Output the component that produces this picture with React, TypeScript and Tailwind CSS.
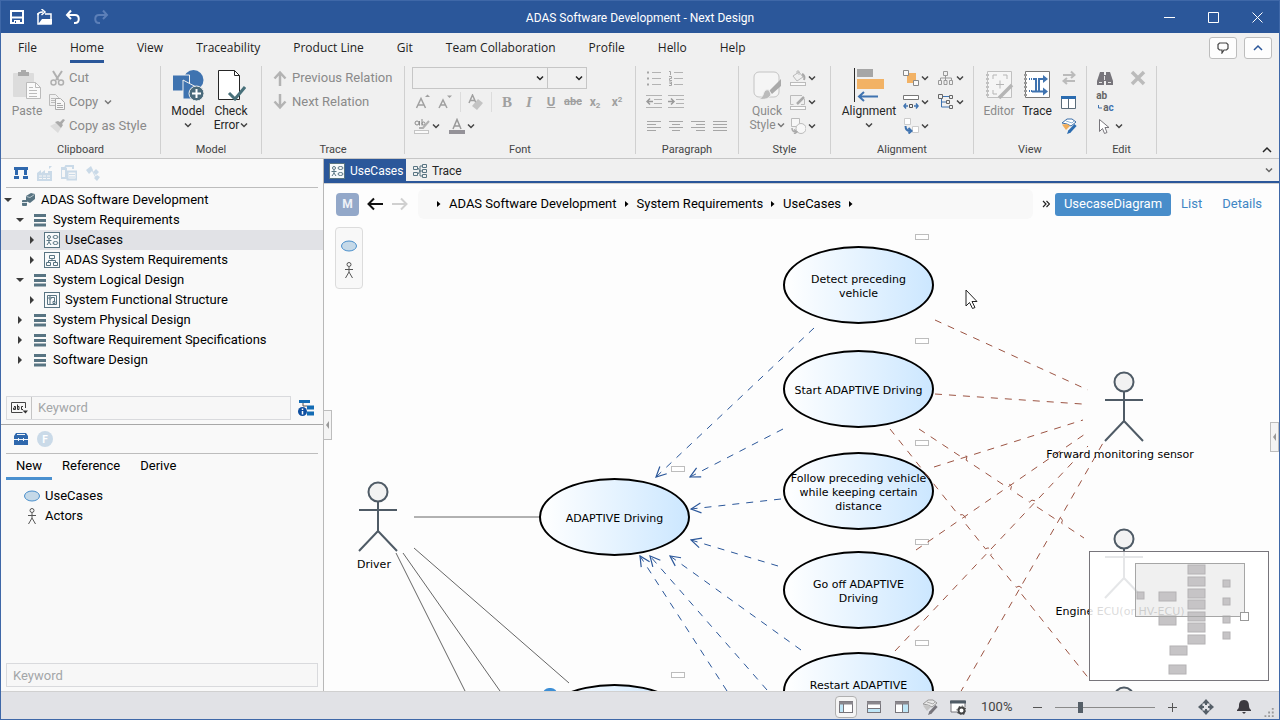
import { ReactNode } from "react";
import { clsx } from "clsx";

type Kind = "project" | "package" | "usecase" | "struct" | "function";

interface TreeItem {
  label: string;
  depth: 0 | 1 | 2;
  kind: Kind;
  open?: boolean;
  selected?: boolean;
}

const TREE: TreeItem[] = [
  { label: "ADAS Software Development", depth: 0, kind: "project", open: true },
  { label: "System Requirements", depth: 1, kind: "package", open: true },
  { label: "UseCases", depth: 2, kind: "usecase", selected: true },
  { label: "ADAS System Requirements", depth: 2, kind: "struct" },
  { label: "System Logical Design", depth: 1, kind: "package", open: true },
  { label: "System Functional Structure", depth: 2, kind: "function" },
  { label: "System Physical Design", depth: 1, kind: "package" },
  { label: "Software Requirement Specifications", depth: 1, kind: "package" },
  { label: "Software Design", depth: 1, kind: "package" },
];

const DEPTH_PADDING = ["pl-px", "pl-[13px]", "pl-[25px]"];

const MENU = ["File", "Home", "View", "Traceability", "Product Line", "Git", "Team Collaboration", "Profile", "Hello", "Help"];

/* ---------- diagram data (canvas coordinates) ---------- */

const USE_CASES = [
  { label: "Detect preceding vehicle", x: 459, y: 22 },
  { label: "Start ADAPTIVE Driving", x: 459, y: 126 },
  { label: "Follow preceding vehicle while keeping certain distance", x: 459, y: 228 },
  { label: "Go off ADAPTIVE Driving", x: 459, y: 327 },
  { label: "Restart ADAPTIVE Driving", x: 459, y: 428 },
  { label: "ADAPTIVE Driving", x: 215, y: 254 },
  { label: "", x: 215, y: 460 },
];

const ACTORS = [
  { label: "Driver", x: 54, y: 268 },
  { label: "Forward monitoring sensor", x: 800, y: 158 },
  { label: "Engine ECU(or HV-ECU)", x: 800, y: 315 },
  { label: "", x: 800, y: 473 },
];

const INCLUDES = [
  [490, 104, 332, 253],
  [459, 205, 366, 253],
  [457, 275, 367, 285],
  [454, 342, 367, 316],
  [477, 426, 346, 332],
  [443, 466, 326, 332],
  [403, 467, 316, 332],
];

const SENSOR_LINKS = [
  [611, 96, 764, 166],
  [611, 170, 758, 180],
  [610, 243, 759, 196],
  [592, 326, 764, 208],
  [571, 427, 764, 222],
  [636, 469, 779, 219],
];

const ECU_LINKS = [
  { line: [595, 205, 760, 314], hops: [0.265, 0.535, 0.69, 0.844] },
  { line: [566, 205, 766, 456], hops: [0.357, 0.49, 0.643] },
];

const DRIVER_LINKS = [
  [72, 329, 141, 467],
  [79, 329, 176, 467],
  [90, 324, 245, 459],
];

const MAP_WIDE = [
  [99, 14], [99, 26], [99, 38], [99, 49], [99, 61], [99, 72], [99, 84],
  [70, 41], [70, 65], [81, 95], [80, 114],
];
const MAP_SMALL = [[48, 41], [134, 29], [134, 47], [134, 65], [134, 81]];

// line with small arcs where it jumps over another link
function hopPath(line: number[], hops: number[]) {
  const [x1, y1, x2, y2] = line;
  const len = Math.hypot(x2 - x1, y2 - y1);
  const dx = ((x2 - x1) / len) * 4;
  const dy = ((y2 - y1) / len) * 4;
  const arcs = hops.map((t) => {
    const x = x1 + (x2 - x1) * t;
    const y = y1 + (y2 - y1) * t;
    return `L${x - dx} ${y - dy}A4 4 0 0 1 ${x + dx} ${y + dy}`;
  });
  return `M${x1} ${y1}${arcs.join("")}L${x2} ${y2}`;
}

/* ---------- icons ---------- */

function Svg({ w = 16, h = 16, className, children }: { w?: number; h?: number; className?: string; children: ReactNode }) {
  return (
    <svg width={w} height={h} viewBox={`0 0 ${w} ${h}`} fill="none" className={clsx("shrink-0", className)} aria-hidden="true">
      {children}
    </svg>
  );
}

function Chevron({ className = "text-[#444]" }: { className?: string }) {
  return (
    <Svg w={8} h={8} className={className}>
      <path d="M1 2.500l3 3 3-3" stroke="currentColor" strokeWidth="1.500" />
    </Svg>
  );
}

function Ellipse() {
  return (
    <Svg>
      <ellipse cx="8" cy="8" rx="7.500" ry="5" fill="#c5d9e8" stroke="#4a8fcb" />
    </Svg>
  );
}

function Person() {
  return (
    <Svg>
      <circle cx="8" cy="2.500" r="2" stroke="#555" />
      <path d="M8 5v5M4 7.500h8M8 10l-3.500 6M8 10l3.500 6" stroke="#555" />
    </Svg>
  );
}

function KindIcon({ kind }: { kind: Kind }) {
  if (kind === "project")
    return (
      <Svg>
        <path d="M6 4l5-3 4 1v5l-5 4-4-2z" fill="#587482" />
        <path d="M6.500 4.500l3.500 1 4.500-3" stroke="#b8c6cd" />
        <rect x="2" y="8" width="5" height="6" rx="1" fill="#587482" />
        <path d="M2 10.500h5" stroke="#dfe6ea" />
      </Svg>
    );
  if (kind === "package")
    return (
      <Svg>
        <path d="M2 3.500h12M2 8.500h12M2 13h12" stroke="#587482" strokeWidth="3" />
      </Svg>
    );
  return (
    <Svg>
      <rect x="0.5" y="0.5" width="15" height="15" fill="#f8fafb" stroke="#587482" />
      {kind === "usecase" && (
        <g stroke="#587482">
          <circle cx="5" cy="5" r="1.500" />
          <path d="M5 7v3M2.500 8.500h5M5 10l-2 3M5 10l2 3" />
          <ellipse cx="11.500" cy="5" rx="2.500" ry="1.500" />
          <ellipse cx="11.500" cy="11" rx="2.500" ry="1.500" />
        </g>
      )}
      {kind === "struct" && (
        <path d="M5.500 3.500h5v3h-5zM2.500 10.500h4v3h-4zM9.500 10.500h4v3h-4zM8 6.500v2M4.500 10V8.500h7V10" stroke="#587482" />
      )}
      {kind === "function" && (
        <path d="M3.500 3.500h9v9h-9zM5 5h2v2H5zM9 9.500h2v2H9zM6 7v5M7 5.500h3.500V9" stroke="#587482" />
      )}
    </Svg>
  );
}

function TraceTabIcon() {
  return (
    <Svg>
      <path d="M1.500 3.500h4v3h-4zM1.500 9.500h4v3h-4zM10.500 1.500h4v3h-4zM10.500 6.500h4v3h-4zM10.500 11.500h4v3h-4zM6 5l2 3M6 11l2-3h2M8 8V3h2M8 8v5h2" stroke="#587482" />
    </Svg>
  );
}

function PanesIcon({ side }: { side: "left" | "bottom" | "right" }) {
  return (
    <Svg>
      <rect x="1.500" y="2.500" width="13" height="11" fill="#fff" stroke="#77757b" />
      {side === "left" && <path d="M2 5h3v8H2z" fill="#bfe6f7" />}
      {side === "bottom" && <path d="M2 9h12v4H2z" fill="#bfe6f7" />}
      {side === "right" && <path d="M8 5h6v8H8z" fill="#bfe6f7" />}
      <path d="M1 4h14" stroke="#8a878d" strokeWidth="3" />
      {side === "left" && <path d="M5.500 5v8" stroke="#77757b" />}
      {side === "right" && <path d="M8.500 5v8" stroke="#77757b" />}
      {side === "bottom" && <path d="M2 9.500h12" stroke="#77757b" />}
    </Svg>
  );
}

function CubePenIcon({ gray = false }: { gray?: boolean }) {
  return (
    <Svg>
      <path d="M1 5l5-4h5l4 3-5 4-4-2z" fill={gray ? "#e8e8e8" : "#fff"} stroke={gray ? "#999" : "#3a6ea8"} />
      <path d="M1 6.500l4 5.500 4-4-3-2z" fill={gray ? "#c4c4c4" : "#f0ad5b"} />
      <path d="M5 3l6 2 2-2" stroke={gray ? "#aaa" : "#8fb4d6"} />
      <path d="M14.500 7L8.500 13.500" stroke={gray ? "#77757b" : "#2b6cb0"} strokeWidth="3" />
      <path d="M7.500 12L6 16l4-1.500z" fill={gray ? "#77757b" : "#2b6cb0"} />
    </Svg>
  );
}

/* ---------- ribbon ---------- */

function Group({ label, className, children }: { label: string; className: string; children: ReactNode }) {
  return (
    <section className={clsx("flex shrink-0", className)} aria-label={label}>
      <div className="flex min-w-0 flex-1 flex-col">
        <div className="flex h-[72px]">{children}</div>
        <div className="mt-1 text-center text-[11px] leading-4 text-[#444]">{label}</div>
      </div>
      <div className="h-[88px] w-px bg-[#d0d0d0]" />
    </section>
  );
}

function BigButton({ icon, lines, arrow, disabled, className }: {
  icon: ReactNode;
  lines: string[];
  arrow?: boolean;
  disabled?: boolean;
  className: string;
}) {
  return (
    <button disabled={disabled} className={clsx("flex flex-col items-center text-xs leading-[14px]", disabled ? "text-[#8a8a8a]" : "text-[#262626]", className)}>
      <span className="flex h-[38px] items-center">{icon}</span>
      <span>{lines[0]}</span>
      <span className="flex h-[14px] items-center gap-px">
        {lines[1]}
        {arrow && <Chevron className={disabled ? "text-[#777]" : "text-[#444]"} />}
      </span>
    </button>
  );
}

function TextButton({ icon, label, arrow }: { icon: ReactNode; label: string; arrow?: boolean }) {
  return (
    <button disabled className="flex h-6 items-center gap-1 whitespace-nowrap text-[13px] text-[#8a8a8a]">
      {icon}
      {label}
      {arrow && <Chevron className="ml-0.5 text-[#777]" />}
    </button>
  );
}

function IconButton({ label, arrow, wide, children }: { label: string; arrow?: boolean; wide?: boolean; children: ReactNode }) {
  return (
    <button aria-label={label} className={clsx("flex h-6 items-center gap-0.5", wide ? "w-[35px]" : arrow ? "w-7" : "w-[22px] justify-center")}>
      {children}
      {arrow && <Chevron />}
    </button>
  );
}

function Ribbon() {
  return (
    <div className="flex h-24 shrink-0 items-start border-b border-[#c6c6c6] bg-[#f0f0f0] pt-[3px]">
      <Group label="Clipboard" className="w-40">
        <BigButton
          className="ml-[9px] w-[34px]"
          disabled
          lines={["Paste"]}
          icon={
            <Svg w={30} h={32}>
              <rect x="1" y="4" width="21" height="24" rx="1" fill="#dcdcdc" />
              <path d="M6 7V3h3V1h5v2h3v4z" fill="#aaa" />
              <path d="M14.500 13.500h9l5 5v11h-14z" fill="#fafafa" stroke="#bbb" />
              <path d="M23.500 13.500v5h5M17 18.500h4M17 21.500h8M17 24.500h8M17 27.500h8" stroke="#bbb" />
            </Svg>
          }
        />
        <div className="ml-[5px] flex flex-col">
          <TextButton label="Cut" icon={
            <Svg>
              <path d="M4 1l5.500 9M13 1L7 10" stroke="#b0b0b0" strokeWidth="2" />
              <circle cx="4.500" cy="12.500" r="2.500" stroke="#b0b0b0" strokeWidth="1.500" />
              <circle cx="12" cy="12.500" r="2.500" stroke="#b0b0b0" strokeWidth="1.500" />
            </Svg>
          } />
          <TextButton label="Copy" arrow icon={
            <Svg>
              <path d="M.5.5h6l3 3v8h-9zM2 4.500h4M2 6.500h5M2 8.500h5" stroke="#bbb" />
              <path d="M6.500 4.500h5l4 4v7h-9z" fill="#f7f7f7" stroke="#aaa" />
              <path d="M8 9.500h4M8 11.500h6M8 13.500h6" stroke="#aaa" />
            </Svg>
          } />
          <TextButton label="Copy as Style" icon={
            <Svg>
              <path d="M1 8l6-3 5 5-3 5z" fill="#dcdcdc" />
              <path d="M6 4l6 6 2-3-1-1 3-4-2-1-3 3-2-1z" fill="#aaa" />
            </Svg>
          } />
        </div>
      </Group>

      <Group label="Model" className="w-[101px]">
        <BigButton
          className="ml-1.5 w-[42px]"
          arrow
          lines={["Model"]}
          icon={
            <Svg w={32} h={32}>
              <circle cx="21.500" cy="11" r="10" fill="#3f73b0" />
              <path d="M.5 6h17v16H.5z" fill="#3f73b0" stroke="#f0f0f0" />
              <path d="M11 11l15 8v11H11z" fill="#3f73b0" stroke="#f0f0f0" />
              <circle cx="24.500" cy="24.500" r="7.500" fill="#4b6b7c" stroke="#f0f0f0" />
              <path d="M24.500 20v9M20 24.500h9" stroke="#fff" strokeWidth="2" />
            </Svg>
          }
        />
        <BigButton
          className="ml-px w-[42px]"
          arrow
          lines={["Check", "Error"]}
          icon={
            <Svg w={30} h={32}>
              <path d="M2.500 1.500h16l5 5v24h-21z" fill="#fff" stroke="#262626" />
              <path d="M18.500 1.500v5h5" stroke="#262626" />
              <path d="M13 24l6 6 10-12" stroke="#48707a" strokeWidth="3" />
            </Svg>
          }
        />
      </Group>

      <Group label="Trace" className="w-[143px]">
        <div className="ml-2.5 flex flex-col">
          <TextButton label="Previous Relation" icon={<Svg><path d="M8 16V3M2.500 8.500L8 2.500l5.500 6" stroke="#b3b3b3" strokeWidth="2.500" /></Svg>} />
          <TextButton label="Next Relation" icon={<Svg><path d="M8 0v13M2.500 7.500l5.500 6 5.500-6" stroke="#b3b3b3" strokeWidth="2.500" /></Svg>} />
        </div>
      </Group>

      <Group label="Font" className="w-[231px]">
        <div className="ml-[7px] flex flex-col">
          <div className="flex h-6 items-center">
            <FontSelect label="Font family" className="w-[136px]" />
            <FontSelect label="Font size" className="-ml-px w-10" />
          </div>
          <div className="flex h-6 items-center text-[#a0a0a0]">
            <IconButton label="Grow font">
              <Svg><path d="M1.500 14L6 4.500 10.500 14M3.500 11h5" stroke="currentColor" strokeWidth="1.500" /><path d="M10 3l2.500-2.500L15 3z" fill="currentColor" /></Svg>
            </IconButton>
            <IconButton label="Shrink font">
              <Svg><path d="M2 14l4-8 4 8M4 11h4.500" stroke="currentColor" strokeWidth="1.500" /><path d="M10 1.500h5L12.500 4z" fill="currentColor" /></Svg>
            </IconButton>
            <div className="ml-1 h-5 w-px bg-[#dcdcdc]" />
            <div className="ml-1">
              <IconButton label="Clear formatting">
                <Svg><path d="M1 9l3.500-8L8 9M2.500 6.500h4" stroke="currentColor" strokeWidth="1.500" /><path d="M10 5l5 4-6 7-5-4z" fill="#c4c4c4" /></Svg>
              </IconButton>
            </div>
            <div className="mx-1 h-5 w-px bg-[#dcdcdc]" />
            <button className="w-[22px] font-['Liberation_Serif',serif] text-[15px] font-bold">B</button>
            <button className="w-[22px] font-['Liberation_Serif',serif] text-[15px] font-bold italic">I</button>
            <button className="w-[22px] text-[13px] font-bold underline">U</button>
            <button className="w-[22px] text-[11px] font-bold line-through">abc</button>
            <button className="w-[22px] text-xs font-bold">x<sub className="text-[8px]">2</sub></button>
            <button className="w-[22px] text-xs font-bold">x<sup className="text-[8px]">2</sup></button>
          </div>
          <div className="flex h-6 items-center gap-[7px] pl-0.5 text-[#8a8a8a]">
            <IconButton label="Highlight" arrow>
              <Svg>
                <circle cx="3" cy="5" r="2" stroke="currentColor" /><path d="M5.500 3v4.500M8 1v6.500" stroke="currentColor" /><circle cx="9.500" cy="5.500" r="1.500" stroke="currentColor" />
                <path d="M15 3l-6 7H5" stroke="#b0b0b0" strokeWidth="2" /><rect x=".5" y="12.500" width="14" height="3" fill="#fafafa" stroke="#c4c4c4" />
              </Svg>
            </IconButton>
            <IconButton label="Font color" arrow>
              <Svg><path d="M4 11L8 1.500 12 11M5.500 8h5" stroke="#999" strokeWidth="1.500" /><path d="M0 12h16v4H0z" fill="#949298" /></Svg>
            </IconButton>
          </div>
        </div>
      </Group>

      <Group label="Paragraph" className="w-[103px]">
        <div className="ml-[7px] flex flex-col text-[#b3b3b3]">
          <div className="flex">
            <IconButton label="Bullets"><Svg><path d="M1 2.500h2M1 8.500h2M1 14.500h2" stroke="#a6a6a6" strokeWidth="2" /><path d="M6 2.500h9M6 8.500h9M6 14.500h9" stroke="currentColor" /></Svg></IconButton>
            <IconButton label="Numbering"><Svg><path d="M1 1.500h1.500V5M1 6.500h2.500v2H1.500V10.500H4M1 12h2.500v3.500H1M1.500 13.500h2" stroke="#a6a6a6" /><path d="M6 2.500h9M6 8.500h9M6 14.500h9" stroke="currentColor" /></Svg></IconButton>
          </div>
          <div className="flex">
            <IconButton label="Decrease indent"><Svg><path d="M0 1.500h16M8 5.500h8M8 9.500h8M0 13.500h16" stroke="currentColor" /><path d="M7 7.500H1M4 4.500l-3 3 3 3" stroke="#999" strokeWidth="1.500" /></Svg></IconButton>
            <IconButton label="Increase indent"><Svg><path d="M0 1.500h16M8 5.500h8M8 9.500h8M0 13.500h16" stroke="currentColor" /><path d="M0 7.500h6M3 4.500l3 3-3 3" stroke="#999" strokeWidth="1.500" /></Svg></IconButton>
          </div>
          <div className="flex text-[#a6a6a6]">
            <IconButton label="Align left"><Svg><path d="M1 3.500h14M1 6.500h9M1 9.500h14M1 12.500h9" stroke="currentColor" /></Svg></IconButton>
            <IconButton label="Align center"><Svg><path d="M1 3.500h14M4 6.500h8M1 9.500h14M4 12.500h8" stroke="currentColor" /></Svg></IconButton>
            <IconButton label="Align right"><Svg><path d="M1 3.500h14M6 6.500h9M1 9.500h14M6 12.500h9" stroke="currentColor" /></Svg></IconButton>
            <IconButton label="Justify"><Svg><path d="M1 3.500h14M1 6.500h14M1 9.500h14M1 12.500h14" stroke="currentColor" /></Svg></IconButton>
          </div>
        </div>
      </Group>

      <Group label="Style" className="w-[92px]">
        <BigButton
          className="ml-2 w-10"
          disabled
          arrow
          lines={["Quick", "Style"]}
          icon={
            <Svg w={30} h={30}>
              <rect x="2" y="2" width="25" height="25" rx="5" fill="#f5f5f5" stroke="#c4c4c4" />
              <path d="M29 9v7l-9 8-3-3z" fill="#aaa" />
              <path d="M17 20c-4-1-5 2-6 5-1 2-2 3-4 4 5 1 11 0 12-5z" fill="#bbb" stroke="#f0f0f0" />
            </Svg>
          }
        />
        <div className="ml-[3px] flex flex-col text-[#bbb]">
          <IconButton label="Fill" wide arrow>
            <Svg><path d="M3 6l6-4 4 5-6 4zM7 4V1h2v4" stroke="currentColor" /><path d="M12 4c2 1 3 3 2 6" stroke="#aaa" strokeWidth="2" /><rect x=".5" y="12.500" width="15" height="3" fill="#fafafa" stroke="currentColor" /></Svg>
          </IconButton>
          <IconButton label="Outline" wide arrow>
            <Svg><path d="M12 1.500H.5v9h3M14.500 5v5.500H11" stroke="currentColor" /><path d="M14 3l-7 7" stroke="#aaa" strokeWidth="2.500" /><rect x=".5" y="12.500" width="15" height="3" fill="#fafafa" stroke="currentColor" /></Svg>
          </IconButton>
          <IconButton label="Change shape" wide arrow>
            <Svg><path d="M1.500.5h8v8h-8z" fill="#f7f7f7" stroke="currentColor" /><circle cx="11" cy="10.500" r="5" fill="#f7f7f7" stroke="currentColor" /><path d="M2 10c0 3 2 4 4 4M4 11.500l3 2.500-3 2" stroke="#aaa" strokeWidth="1.500" /></Svg>
          </IconButton>
        </div>
      </Group>

      <Group label="Alignment" className="w-[143px]">
        <BigButton
          className="ml-[9px] w-[58px]"
          arrow
          lines={["Alignment"]}
          icon={
            <Svg w={32} h={34}>
              <path d="M1.500 0v34" stroke="#262626" />
              <path d="M4 1h16v8H4z" fill="#a6a6a6" />
              <path d="M4 11h27v10H4z" fill="#f2b265" />
              <path d="M25 28.500H6M11 24l-5 4.500 5 4.500" stroke="#3f73b0" strokeWidth="2" />
            </Svg>
          }
        />
        <div className="ml-[5px] flex flex-col">
          <IconButton label="Order" wide arrow>
            <Svg><path d="M4 3h9v10H4z" fill="#f2b265" /><path d="M.5.5h5v5h-5zM10.500 10.500h5v5h-5z" fill="#fafafa" stroke="#888" /></Svg>
          </IconButton>
          <IconButton label="Size" wide arrow>
            <Svg><path d="M.5 1.500h15v4H.5z" fill="#fff" stroke="#777" /><path d="M6.500 10.500h3v3h-3z" stroke="#555" /><path d="M5 12H1M3 9.500L1 12l2 2.500M11 12h4M13 9.500l2 2.500-2 2.500" stroke="#3f73b0" strokeWidth="1.500" /></Svg>
          </IconButton>
          <IconButton label="Rotate" wide arrow>
            <Svg><path d="M1.500.5h6v6h-6zM9.500 8.500h6v6h-6z" fill="#fff" stroke="#ccc" /><path d="M2.500 8c0 4 2 5 5 5M5.500 10l3 3-3 2.500" stroke="#3f73b0" strokeWidth="2" /></Svg>
          </IconButton>
        </div>
        <div className="flex flex-col">
          <IconButton label="Auto layout" wide arrow>
            <Svg><path d="M5.500 1.500h4v4h-4zM.5 10.500h3v4h-3zM6 10.500h3v4H6zM11.500 10.500h3v4h-3zM7.500 6v4M2.500 10V8h11v2" stroke="#999" /></Svg>
          </IconButton>
          <IconButton label="Tree layout" wide arrow>
            <Svg><path d="M.5.500h4v4h-4zM11.500 1.500h3v3h-3zM8.500 6.500h3v3h-3zM11.500 11.500h3v3h-3z" stroke="#666" /><path d="M5 2.500h6M3.500 5v8h8M3 8h5" stroke="#3f73b0" /></Svg>
          </IconButton>
        </div>
      </Group>

      <Group label="View" className="w-[113px]">
        <BigButton
          className="ml-1.5 w-[38px]"
          disabled
          lines={["Editor"]}
          icon={
            <Svg w={30} h={32}>
              <path d="M3.500 2.500h24v26h-24z" fill="#f5f5f5" stroke="#c0c0c0" />
              <path d="M3.500 5v24" stroke="#c0c0c0" strokeWidth="3" strokeDasharray="2 2" />
              <path d="M9 10V6h4M19 6h4v4M9 21v4h4M12 15.500h8M16 11.500v8" stroke="#b5b5b5" />
              <path d="M28 16L15 29" stroke="#b5b5b5" strokeWidth="3.500" />
            </Svg>
          }
        />
        <BigButton
          className="w-[38px]"
          lines={["Trace"]}
          icon={
            <Svg w={28} h={32}>
              <path d="M2.500 2.500h24v26h-24z" fill="#fff" stroke="#777" />
              <path d="M2.500 5v24" stroke="#999" strokeWidth="3" strokeDasharray="2 2" />
              <path d="M6 10h3M6 22h3" stroke="#3f73b0" strokeWidth="2" strokeDasharray="1 1" />
              <path d="M10 10h3v12M9 22.500h8M16 9v14M15 10h6M16 22.500h5" stroke="#3f73b0" strokeWidth="2" />
              <path d="M20 6l5 4-5 4zM20 18.500l5 4-5 4z" fill="#3f73b0" />
            </Svg>
          }
        />
        <div className="ml-0.5 flex flex-col">
          <IconButton label="Swap">
            <Svg><path d="M2 5h11M10 1.500L13.500 5 10 8M14 11H3M6 8l-3.500 3L6 14" stroke="#bbb" strokeWidth="2" /></Svg>
          </IconButton>
          <IconButton label="Split window">
            <Svg><path d="M.5 2.500h14v12H.5zM7.500 4v10" fill="#fff" stroke="#5a6b78" /><path d="M0 3.500h15" stroke="#2b6cb0" strokeWidth="3" /></Svg>
          </IconButton>
          <IconButton label="Paint"><CubePenIcon /></IconButton>
        </div>
      </Group>

      <Group label="Edit" className="w-[70px]">
        <div className="ml-[7px] flex w-[31px] flex-col">
          <IconButton label="Find">
            <Svg><path d="M3 2h4v3h2V2h4l3 9v4H9v-4H7v4H0v-4z" fill="#77757b" /><path d="M2 12.500h3M11 12.500h3M7.500 6v4" stroke="#e4e4e4" /></Svg>
          </IconButton>
          <IconButton label="Replace">
            <span className="flex flex-col text-[10px] font-bold leading-3 text-[#666]">
              <span className="text-left">ab</span>
              <span className="flex items-center pl-0.5">
                <Svg w={5} h={8}><path d="M.5 1v3H4" stroke="#3f73b0" /></Svg>
                a<span className="text-[#3f73b0]">c</span>
              </span>
            </span>
          </IconButton>
          <div className="pl-[3px]">
            <IconButton label="Select" arrow>
              <Svg><path d="M2.500 1.500v12l3-3 2 5 2.500-1-2-5h4z" fill="#fff" stroke="#77757b" /></Svg>
            </IconButton>
          </div>
        </div>
        <div className="ml-0.5">
          <IconButton label="Delete">
            <Svg><path d="M2 2l12 12M14 2L2 14" stroke="#bbb" strokeWidth="3.500" /></Svg>
          </IconButton>
        </div>
      </Group>

      <button aria-label="Collapse ribbon" className="ml-auto mr-[7px] self-end pb-1">
        <Svg w={10} h={8}><path d="M1 6l4-4 4 4" stroke="#262626" strokeWidth="1.500" /></Svg>
      </button>
    </div>
  );
}

function FontSelect({ label, className }: { label: string; className: string }) {
  return (
    <div className={clsx("relative h-[22px]", className)}>
      <select aria-label={label} className="h-full w-full appearance-none border border-[#c6c6c6] bg-[#f0f0f0]" />
      <span className="pointer-events-none absolute inset-y-0 right-1 flex items-center"><Chevron className="text-[#222]" /></span>
    </div>
  );
}

/* ---------- side panels ---------- */

function ModelTree() {
  return (
    <ul className="pt-0.5 text-[13px]">
      {TREE.map((item) => (
        <li key={item.label} className={clsx("flex h-5 items-center", DEPTH_PADDING[item.depth], item.selected && "bg-[#e1e2e6]")}>
          <Svg w={12} h={12}>
            <path d={item.open ? "M2 4h8L6 8z" : "M4 2v8l4-4z"} fill="#3c3c3c" />
          </Svg>
          <span className="ml-1.5 mr-[5px] flex"><KindIcon kind={item.kind} /></span>
          {item.label}
        </li>
      ))}
    </ul>
  );
}

function SidePanel() {
  return (
    <aside className="flex w-[323px] shrink-0 flex-col border-r border-[#b8b8b8] bg-[#f9f9f9]">
      <div className="flex h-[266px] shrink-0 flex-col border-b border-[#a8a8a8]">
        <div className="mx-[5px] flex h-[29px] items-center gap-2 border-b border-[#bdbdbd] pl-[7px]">
          <Svg><path d="M1 3.500h14M3.500 5v5M12.500 5v5M1 12.500h5M10 12.500h5" stroke="#2f68ad" strokeWidth="3" /></Svg>
          <Svg><path d="M0 8l4-3v3l4-3v3h3V6h4v10H0zM12 4V1h3" fill="#cadae8" /><path d="M2 11h11M2 13.500h11" stroke="#f7f7f7" strokeDasharray="3 1" /></Svg>
          <Svg><path d="M0 3h4l1-2h7v3M0 4h5v9H0zM6.500 6.500h9v8h-9z" fill="#f7f7f7" stroke="#cadae8" strokeWidth="2" /><path d="M8 9.500h6M8 12h6" stroke="#cadae8" /></Svg>
          <Svg><path d="M1 5l5-4 2 4-4 4zM11 4l3 3-3 3-3-3zM12 10l3 2-3 4-3-3z" fill="#cadae8" /><path d="M7 5l4 8" stroke="#cadae8" /></Svg>
        </div>
        <ModelTree />
        <div className="mb-1 mt-auto flex items-center pl-[5px] pr-[9px]">
          <div className="flex h-6 flex-1 border border-[#d9dadd] bg-[#f7f7f7]">
            <button aria-label="Match mode" className="flex w-[25px] items-center justify-center border-r border-[#c4c4c4]">
              <Svg w={18} h={12}>
                <path d="M15.500 6V.5H1.500v10h11" stroke="#444" />
                <path d="M12.500 8.500H18l-2.500 3z" fill="#333" />
                <path d="M4 4.500h1.500v3H3.500V6H5M7.500 2.500v5h1.500v-3H8M13 4.500h-1.500v3H13" stroke="#333" />
              </Svg>
            </button>
            <input aria-label="Filter models" placeholder="Keyword" className="min-w-0 flex-1 bg-transparent px-1.5 text-[13px] outline-none placeholder:text-[#a3a6a8]" />
          </div>
          <button aria-label="Model info" className="ml-[7px]">
            <Svg>
              <path d="M1 1.500h11" stroke="#146cb4" strokeWidth="3" />
              <path d="M5 3v3h4M10 8h6M10 14h6" stroke="#555" />
              <path d="M9 7.500h7M9 13.500h7" stroke="#146cb4" strokeWidth="4" />
              <circle cx="4.500" cy="11.500" r="4.500" fill="#0f4fa0" />
              <path d="M4.500 8.500v1.500M4.500 11v3.500" stroke="#fff" strokeWidth="1.500" />
            </Svg>
          </button>
        </div>
      </div>

      <div className="flex min-h-0 flex-1 flex-col px-[5px]">
        <div className="flex h-[29px] shrink-0 items-center gap-2 border-b border-[#bdbdbd] pl-[7px]">
          <Svg><path d="M3 2h10l2 3v9H1V5z" fill="#2f68ad" /><path d="M4 3.500h8M1 8.500h14M5.500 7v3M10.500 7v3" stroke="#f2f6fa" /></Svg>
          <span className="flex h-4 w-4 items-center justify-center rounded-full bg-[#cadae8] text-[10px] font-bold text-white">F</span>
        </div>
        <div role="tablist" className="flex h-[26px] shrink-0 text-[13px]">
          <button role="tab" aria-selected="true" className="w-[46px] border-b-[3px] border-[#4a90cf]">New</button>
          <button role="tab" className="px-2.5 pb-[3px]">Reference</button>
          <button role="tab" className="px-2.5 pb-[3px]">Derive</button>
        </div>
        <ul className="flex-1 pl-[18px] pt-1.5 text-[13px]">
          <li className="flex h-5 items-center gap-[5px]"><Ellipse />UseCases</li>
          <li className="flex h-5 items-center gap-[5px]"><Person />Actors</li>
        </ul>
        <input aria-label="Filter palette" placeholder="Keyword" className="mb-1 h-6 w-full border border-[#d9dadd] bg-[#f7f7f7] px-1.5 text-[13px] outline-none placeholder:text-[#a3a6a8]" />
      </div>
    </aside>
  );
}

/* ---------- diagram ---------- */

function Minimap() {
  return (
    <div className="absolute bottom-2.5 right-2.5 h-[130px] w-[180px] border border-[#77757b] bg-white/85">
      <svg className="absolute -left-px -top-px" width="180" height="130" viewBox="0 0 180 130" fill="none" aria-label="Overview">
        <rect x="46.500" y="12.500" width="109" height="53" fill="#000" fillOpacity="0.06" stroke="#a6a6a6" />
        {MAP_WIDE.map(([x, y]) => <rect key={`${x}-${y}`} x={x} y={y} width="17" height="9" fill="#c6c4c6" stroke="#b4b2b4" />)}
        {MAP_SMALL.map(([x, y]) => <rect key={`${x}-${y}`} x={x} y={y} width="7" height="7" fill="#c6c4c6" stroke="#b4b2b4" />)}
        <path d="M46.500 65.500h109v-53" stroke="#a6a6a6" />
        <rect x="151.500" y="61.500" width="8" height="8" fill="#fff" stroke="#999" />
      </svg>
    </div>
  );
}

function Diagram() {
  return (
    <div className="relative min-h-0 flex-1 overflow-hidden bg-[#fdfdfd] font-['DejaVu_Sans',sans-serif] text-[11px] leading-[14px]">
      {USE_CASES.map((node) => (
        <div key={node.y + node.label} className="absolute h-[78px] w-[151px]" style={{ left: node.x, top: node.y }}>
          <div className="flex h-full items-center justify-center rounded-[50%] border-2 border-black bg-linear-to-r from-white to-[#cce7ff] pt-1 text-center">
            <span className={clsx("-mx-1", node.label.length > 50 ? "w-[138px]" : "w-[132px]")}>{node.label}</span>
          </div>
          <div className="absolute -top-3 left-[132px] h-1.5 w-3.5 border border-[#bdbdbd] bg-white" />
        </div>
      ))}
      <div className="absolute left-[219px] top-[464px] h-3 w-3.5 rounded-full bg-[#3d8fd6]" />

      <svg className="pointer-events-none absolute inset-0 h-full w-full" fill="none">
        <defs>
          <marker id="tip" viewBox="0 0 12 12" refX="11" refY="6" markerWidth="12" markerHeight="12" markerUnits="userSpaceOnUse" orient="auto">
            <path d="M1 1l10 5-10 5" stroke="#2b579a" strokeWidth="1.200" fill="none" />
          </marker>
        </defs>
        <g stroke="#2b579a" strokeDasharray="7 7">
          {INCLUDES.map(([x1, y1, x2, y2]) => <path key={y1} d={`M${x1} ${y1}L${x2} ${y2}`} markerEnd="url(#tip)" />)}
        </g>
        <g stroke="#9c5443" strokeDasharray="7 7">
          {SENSOR_LINKS.map(([x1, y1, x2, y2]) => <path key={y1} d={`M${x1} ${y1}L${x2} ${y2}`} />)}
          {ECU_LINKS.map((link) => <path key={link.line[0]} d={hopPath(link.line, link.hops)} />)}
        </g>
        <path d="M90 293h125" stroke="#666" />
        <g stroke="#666">
          {DRIVER_LINKS.map(([x1, y1, x2, y2]) => <path key={x1} d={`M${x1} ${y1}L${x2} ${y2}`} />)}
        </g>
        {ACTORS.map(({ x, y }) => (
          <g key={y} stroke="#4f5b66" strokeWidth="2">
            <circle cx={x} cy={y} r="9.500" fill="#f2f2f2" />
            <path d={`M${x} ${y + 10}v29M${x - 19} ${y + 18}h38M${x - 19} ${y + 59}l19-20 19 20`} />
          </g>
        ))}
      </svg>

      {ACTORS.map((actor) => (
        <div key={actor.y} className="absolute w-[160px] text-center" style={{ left: actor.x - 84, top: actor.y + 66 }}>
          {actor.label}
        </div>
      ))}

      <div className="absolute left-[11px] top-[3px] flex h-[62px] w-7 flex-col items-center justify-center gap-2 rounded-sm border border-[#dcdcdc] bg-[#f8f8f8]">
        <button aria-label="Add use case"><Ellipse /></button>
        <button aria-label="Add actor"><Person /></button>
      </div>

      <Svg w={14} h={20} className="absolute left-[641px] top-[65px]">
        <path d="M1 1v16l3.500-3.500 3 6 2.500-1-3-6h5z" fill="#fff" stroke="#222" />
      </Svg>

      <Minimap />
      <button aria-label="Open right pane" className="absolute right-0 top-[198px] flex h-[30px] w-[9px] items-center justify-center border border-[#bdbdbd] bg-[#f4f4f4]">
        <Svg w={5} h={8}><path d="M4 0v8L1 4z" fill="#999" /></Svg>
      </button>
    </div>
  );
}

function CrumbArrow() {
  return <Svg w={4} h={8}><path d="M0 1v6l3.500-3z" fill="#000" /></Svg>;
}

function Editor() {
  return (
    <main className="relative flex min-w-0 flex-1 flex-col bg-[#fdfdfd]">
      <div className="flex h-6 shrink-0 border-b-2 border-[#2b579a] bg-[#f0f0f0] text-xs">
        <button className="flex w-[82px] items-center gap-[5px] bg-[#2b579a] pl-[5px] pt-0.5 text-white"><KindIcon kind="usecase" />UseCases</button>
        <button className="flex items-center gap-1 pl-1.5 pt-0.5 text-[#262626]"><TraceTabIcon />Trace</button>
        <button aria-label="Tab list" className="ml-auto mr-1.5"><Chevron className="text-[#666]" /></button>
      </div>

      <div className="flex h-[41px] shrink-0 items-center border-t border-[#d0d0d0] pl-3 pr-[7px] text-[13px]">
        <button className="h-[23px] w-[23px] rounded-sm bg-[#93a8c9] text-xs font-bold text-[#eef2f8]">M</button>
        <button aria-label="Back" className="ml-2"><Svg><path d="M16 8H1.500M7 2.500L1.500 8 7 13.500" stroke="#111" strokeWidth="2" /></Svg></button>
        <button aria-label="Forward" className="ml-[9px]"><Svg><path d="M0 8h14.500M9 2.500L14.500 8 9 13.500" stroke="#d0d0d0" strokeWidth="2" /></Svg></button>
        <nav aria-label="Breadcrumb" className="ml-2.5 flex h-[30px] flex-1 items-center rounded-md bg-[#f8f8f8] pl-[19px]">
          <CrumbArrow />
          <a href="#project" className="mx-2">ADAS Software Development</a>
          <CrumbArrow />
          <a href="#requirements" className="mx-2">System Requirements</a>
          <CrumbArrow />
          <a href="#usecases" className="mx-2">UseCases</a>
          <CrumbArrow />
        </nav>
        <button aria-label="More" className="ml-[9px]">
          <Svg w={8} h={8}><path d="M1 1l3 3-3 3M4.500 1l3 3-3 3" stroke="#222" strokeWidth="1.200" /></Svg>
        </button>
        <button className="ml-[5px] h-[23px] rounded-[3px] bg-[#488dca] px-[9px] text-white">UsecaseDiagram</button>
        <button className="px-2.5 text-[#3f86c4]">List</button>
        <button className="px-2.5 text-[#3f86c4]">Details</button>
      </div>

      <Diagram />

      <button aria-label="Collapse left pane" className="absolute -left-px top-[251px] flex h-[30px] w-[9px] items-center justify-center border border-[#bdbdbd] bg-[#f4f4f4]">
        <Svg w={5} h={8}><path d="M4 0v8L1 4z" fill="#999" /></Svg>
      </button>
    </main>
  );
}

function StatusBar() {
  return (
    <footer className="flex h-7 shrink-0 items-center justify-end border-t border-[#d0d0d0] bg-[#e1e2e6] pt-[3px] text-[13px] text-[#444]">
      <button aria-label="Left pane" className="mr-[9px] flex h-[22px] w-[22px] items-center justify-center rounded-sm border border-[#b0b0b0] bg-[#f5f5f5]"><PanesIcon side="left" /></button>
      <div className="mr-[15px] flex items-center gap-3">
        <button aria-label="Bottom pane"><PanesIcon side="bottom" /></button>
        <button aria-label="Right pane"><PanesIcon side="right" /></button>
        <button aria-label="Paint mode"><CubePenIcon gray /></button>
        <button aria-label="Window settings">
          <Svg><path d="M15 8V2H1v11h6" fill="#fff" stroke="#77757b" /><path d="M0 3h16" stroke="#4f5b66" strokeWidth="3" /><circle cx="11.500" cy="11.500" r="3" fill="#fff" stroke="#444" strokeWidth="2" /><circle cx="11.500" cy="11.500" r="4.500" stroke="#444" strokeDasharray="1.500 2" /></Svg>
        </button>
      </div>
      <span className="w-[52px]">100%</span>
      <button aria-label="Zoom out" className="mr-[13px]"><Svg w={9} h={9}><path d="M0 4.500h9" stroke="#555" /></Svg></button>
      <input
        type="range"
        aria-label="Zoom"
        defaultValue={24}
        className="h-3 w-[100px] appearance-none bg-transparent [&::-webkit-slider-runnable-track]:h-px [&::-webkit-slider-runnable-track]:bg-[#8a8a8a] [&::-webkit-slider-thumb]:-mt-[5px] [&::-webkit-slider-thumb]:h-[11px] [&::-webkit-slider-thumb]:w-[5px] [&::-webkit-slider-thumb]:appearance-none [&::-webkit-slider-thumb]:bg-[#555f68]"
      />
      <button aria-label="Zoom in" className="ml-[13px]"><Svg w={9} h={9}><path d="M0 4.500h9M4.500 0v9" stroke="#555" /></Svg></button>
      <button aria-label="Fit" className="ml-[21px]">
        <Svg><path d="M8 0l4 4.500H4zM8 16l4-4.500H4zM0 8l4.500-4v8zM16 8l-4.500-4v8z" fill="#555f68" /><path d="M8 3v3M8 10v3M3 8h3M10 8h3" stroke="#555f68" strokeWidth="2" /></Svg>
      </button>
      <button aria-label="Notifications" className="ml-[22px]">
        <Svg><path d="M8 1c4 0 5 3 5 6 0 2 1 3 2 4v1H1v-1c1-1 2-2 2-4 0-3 1-6 5-6zM6 13h4l-2 2z" fill="#3c3a40" /></Svg>
      </button>
      <Svg w={12} h={12} className="ml-3 mr-[3px] self-end pb-px"><path d="M8 1h2v2H8zM4 5h2v2H4zM8 5h2v2H8zM0 9h2v2H0zM4 9h2v2H4zM8 9h2v2H8z" fill="#999" /></Svg>
    </footer>
  );
}

export default function App() {
  return (
    <div className="flex h-screen flex-col overflow-hidden border-x border-b border-[#3f68a8] bg-[#f0f0f0] font-[Roboto,sans-serif] text-black">
      <header className="grid h-[33px] shrink-0 grid-cols-[1fr_auto_1fr] items-center border-t border-[#3f68a8] bg-[#2b579a] text-white">
        <div className="flex items-center gap-3 pl-2">
          <button aria-label="Save"><Svg><path d="M2 2h12v12H2z" stroke="#fff" strokeWidth="2" /><path d="M3 8.500h10" stroke="#fff" strokeWidth="2" /><path d="M5 11h6v4H5z" fill="#fff" /><path d="M6.500 12v2" stroke="#2b579a" /></Svg></button>
          <button aria-label="Open"><Svg><path d="M1 4v11h13V5H8" stroke="#fff" strokeWidth="1.500" /><path d="M2 14l3-4h10v5H2z" fill="#fff" /><path d="M1 6c0-3 3-3 5-3M4.500 0L8 3 4.500 6" stroke="#fff" strokeWidth="1.500" /></Svg></button>
          <button aria-label="Undo"><Svg><path d="M2 6h8c5 0 5 8 0 8H9M6 1.500L2 6l4 4" stroke="#fff" strokeWidth="2" /></Svg></button>
          <button aria-label="Redo" disabled><Svg><path d="M14 6H6c-5 0-5 8 0 8h1M10 1.500L14 6l-4 4" stroke="#5c7fb8" strokeWidth="2" /></Svg></button>
        </div>
        <h1 className="pt-0.5 text-xs">ADAS Software Development - Next Design</h1>
        <div className="flex justify-end">
          <button aria-label="Minimize" className="flex w-11 justify-center"><Svg w={11} h={11}><path d="M0 5.500h11" stroke="#fff" /></Svg></button>
          <button aria-label="Maximize" className="flex w-11 justify-center"><Svg w={11} h={11}><path d="M.5.5h10v10H.5z" stroke="#fff" /></Svg></button>
          <button aria-label="Close" className="flex w-11 justify-center"><Svg w={11} h={11}><path d="M.5.5l10 10M10.500.5l-10 10" stroke="#fff" /></Svg></button>
        </div>
      </header>

      <div className="flex h-[30px] shrink-0 items-center pr-[7px]">
        <div role="tablist" className="flex h-full gap-[33px] pl-[17px] font-['Open_Sans',sans-serif] text-xs text-[#222]">
          {MENU.map((item) => (
            <button key={item} role="tab" aria-selected={item === "Home"} className={clsx("whitespace-nowrap border-b-[3px] pt-0.5", item === "Home" ? "border-[#2b579a]" : "border-transparent")}>
              {item}
            </button>
          ))}
        </div>
        <button aria-label="Feedback" className="ml-auto flex h-[22px] w-7 items-center justify-center rounded-[3px] border border-[#bdbdbd] bg-[#fdfdfd]">
          <Svg w={12} h={12}><path d="M2.500 1h7l1.500 1.500v4L9.500 8H7l-2 3V8H2.500L1 6.500v-4z" stroke="#444" strokeWidth="1.200" /></Svg>
        </button>
        <button aria-label="Hide ribbon" className="ml-[7px] flex h-[22px] w-7 items-center justify-center rounded-[3px] border border-[#bdbdbd] bg-[#fdfdfd]">
          <Svg w={10} h={8}><path d="M1 6l4-4 4 4" stroke="#2b579a" strokeWidth="1.500" /></Svg>
        </button>
      </div>

      <Ribbon />

      <div className="flex min-h-0 flex-1">
        <SidePanel />
        <Editor />
      </div>

      <StatusBar />
    </div>
  );
}
